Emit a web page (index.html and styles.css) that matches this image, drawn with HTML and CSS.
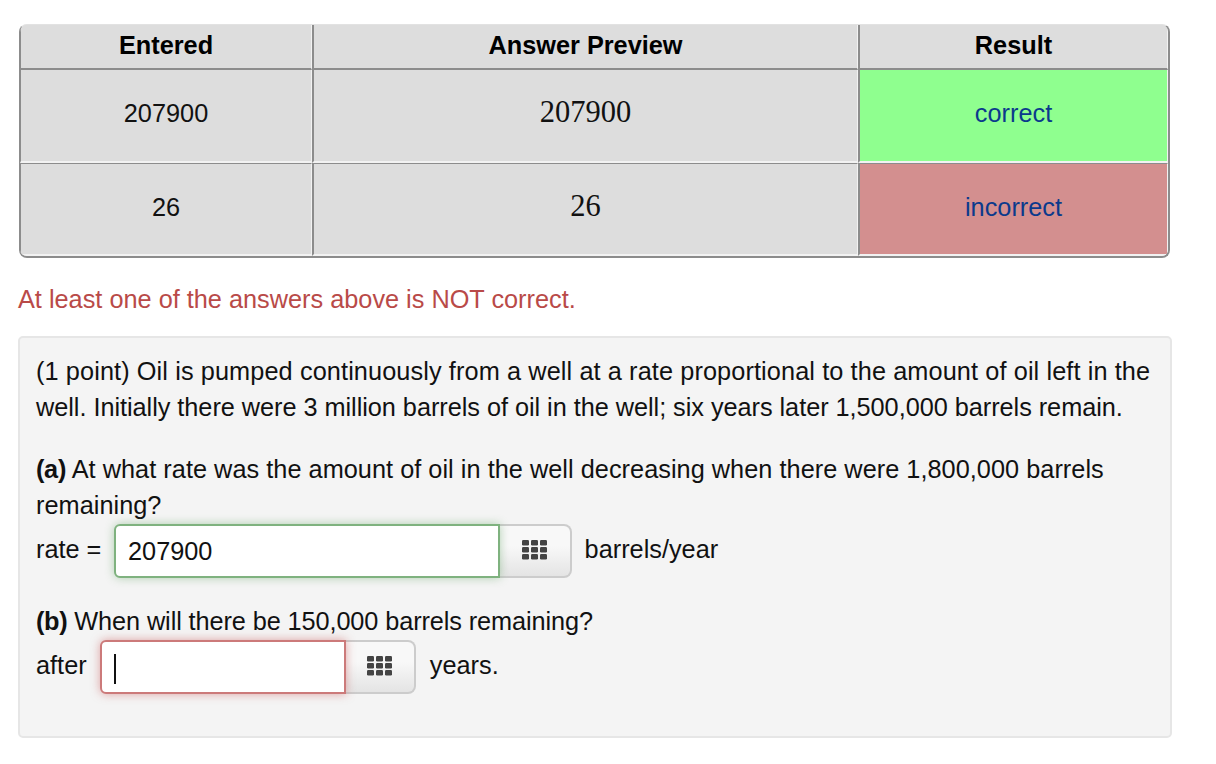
FILE: index.html
```html
<!DOCTYPE html>
<html lang="en">
<head>
    <meta charset="UTF-8">
    <meta name="viewport" content="width=device-width, initial-scale=1.0">
    <title>Attempt Results</title>
    <link rel="stylesheet" href="styles.css">
</head>
<body>
    <div class="container">
        <table class="results">
            <tr>
                <th class="col-entered">Entered</th>
                <th class="col-preview">Answer Preview</th>
                <th class="col-result">Result</th>
            </tr>
            <tr>
                <td>207900</td>
                <td class="preview">207900</td>
                <td class="result correct">correct</td>
            </tr>
            <tr>
                <td>26</td>
                <td class="preview">26</td>
                <td class="result incorrect">incorrect</td>
            </tr>
        </table>

        <p class="summary">At least one of the answers above is NOT correct.</p>

        <div class="well">
            <p class="intro"><span class="first-line">(1 point) Oil is pumped continuously from a well at a rate proportional to the amount of oil left in the</span> well. Initially there were 3 million barrels of oil in the well; six years later 1,500,000 barrels remain.</p>

            <p class="question"><b>(a)</b> At what rate was the amount of oil in the well decreasing when there were 1,800,000 barrels remaining?</p>
            <div class="answer-row">
                <span class="label">rate =</span>
                <div class="input-group">
                    <div class="field field-rate good">207900</div>
                    <button class="keypad">
                        <svg width="26" height="20" viewBox="0 0 26 20"><use href="#grid"/></svg>
                    </button>
                </div>
                <span class="label">barrels/year</span>
            </div>

            <p class="question question-b"><b>(b)</b> When will there be 150,000 barrels remaining?</p>
            <div class="answer-row answer-row-b">
                <span class="label">after</span>
                <div class="input-group">
                    <div class="field field-time bad"><span class="caret"></span></div>
                    <button class="keypad keypad-b">
                        <svg width="26" height="20" viewBox="0 0 26 20"><use href="#grid"/></svg>
                    </button>
                </div>
                <span class="label">years.</span>
            </div>
        </div>
    </div>

    <svg width="0" height="0" class="defs">
        <defs>
            <g id="grid" fill="#444">
                <rect x="0" y="0" width="7" height="5.4" rx="1.2"/>
                <rect x="9" y="0" width="7" height="5.4" rx="1.2"/>
                <rect x="18" y="0" width="7" height="5.4" rx="1.2"/>
                <rect x="0" y="7" width="7" height="5.4" rx="1.2"/>
                <rect x="9" y="7" width="7" height="5.4" rx="1.2"/>
                <rect x="18" y="7" width="7" height="5.4" rx="1.2"/>
                <rect x="0" y="14" width="7" height="5.4" rx="1.2"/>
                <rect x="9" y="14" width="7" height="5.4" rx="1.2"/>
                <rect x="18" y="14" width="7" height="5.4" rx="1.2"/>
            </g>
        </defs>
    </svg>
</body>
</html>
```

FILE: styles.css
```css
body {
    font-family: "Liberation Sans", Arial, sans-serif;
    font-size: 25.3px;
    line-height: 36px;
    color: #111;
    background: white;
    margin: 0;
}
.container {
    width: 1154px;
    margin-left: 18px;
    padding-top: 24px;
}
.results {
    width: 1151px;
    margin-left: 1px;
    border-collapse: separate;
    border-spacing: 0;
    table-layout: fixed;
    border: 2px solid #8c8c8c;
    border-top: 1px solid #e2e2e2;
    border-left-width: 1px;
    border-radius: 8px;
    overflow: hidden;
    background: #ddd;
}
.results th, .results td {
    text-align: center;
    padding: 0;
    background: #ddd;
    background-clip: padding-box;
    border-left: 1px solid #8c8c8c;
    border-right: 1px solid #f2f2f2;
}
.results th + th, .results td + td {
    border-left-width: 2px;
}
.results th {
    height: 39px;
    padding-bottom: 4px;
    color: #000;
    font-weight: bold;
    border-bottom: 2px solid #8c8c8c;
}
.results td {
    height: 85px;
    padding-bottom: 6px;
    border-bottom: 2px solid #f2f2f2;
}
.results tr:last-child td {
    height: 85px;
    padding-bottom: 5px;
    border-top: 1px solid #8c8c8c;
}
.col-entered { width: 290px; }
.col-preview { width: 543px; }
.results td.preview {
    font-family: "Liberation Serif", "Times New Roman", serif;
    font-size: 30.5px;
    color: #111;
}
.results tr td.preview {
    height: 84px;
    padding-bottom: 7px;
}
.results tr:last-child td.preview {
    height: 84px;
    padding-bottom: 6px;
}
.results td.correct {
    background-color: #8fff8f;
    color: #0b3a8c;
}
.results td.incorrect {
    background-color: #d38f8f;
    color: #0b3a8c;
}
.summary {
    margin: 23px 0 19px 0;
    color: #b94a48;
}
.well {
    background: #f4f4f4;
    border: 2px solid #e6e6e6;
    border-radius: 5px;
    padding: 15px 16px 42px 16px;
    height: 402px;
    box-sizing: border-box;
}
.well p {
    margin: 0;
}
.well b {
    letter-spacing: -0.3px;
}
.first-line {
    letter-spacing: 0.1px;
}
.intro {
    letter-spacing: -0.04px;
    margin-bottom: 26px !important;
}
.question {
    letter-spacing: 0.03px;
}
.answer-row {
    display: flex;
    align-items: center;
    gap: 12.6px;
    height: 54px;
    margin-top: 1px;
}
.answer-row-b {
    gap: 13.6px;
}
.label {
    margin-top: -4px;
}
.question-b {
    letter-spacing: -0.1px;
    margin-top: 25px !important;
}
.input-group {
    display: flex;
    height: 54px;
}
.field {
    box-sizing: border-box;
    height: 54px;
    background: white;
    border-radius: 6px 0 0 6px;
    border: 2px solid;
    padding-left: 12px;
    line-height: 50px;
    position: relative;
    z-index: 1;
}
.field-rate { width: 386px; }
.field-time { width: 246px; }
.good {
    border-color: #7fb27f;
    box-shadow: 0 0 10px rgba(90, 160, 90, 0.45);
}
.bad {
    border-color: #cc7a7a;
    box-shadow: 0 0 10px rgba(200, 80, 80, 0.5);
}
.caret {
    display: inline-block;
    width: 2px;
    height: 30px;
    background: #111;
    vertical-align: middle;
}
.keypad {
    box-sizing: border-box;
    width: 72px;
    height: 54px;
    padding: 0 0 2px 0;
    border: 2px solid #ccc;
    border-left: none;
    border-radius: 0 8px 8px 0;
    background: linear-gradient(#f8f8f8 40%, #e4e4e4 100%);
    display: flex;
    align-items: center;
    justify-content: center;
}
.keypad-b {
    width: 70px;
}
.defs {
    position: absolute;
}
```
